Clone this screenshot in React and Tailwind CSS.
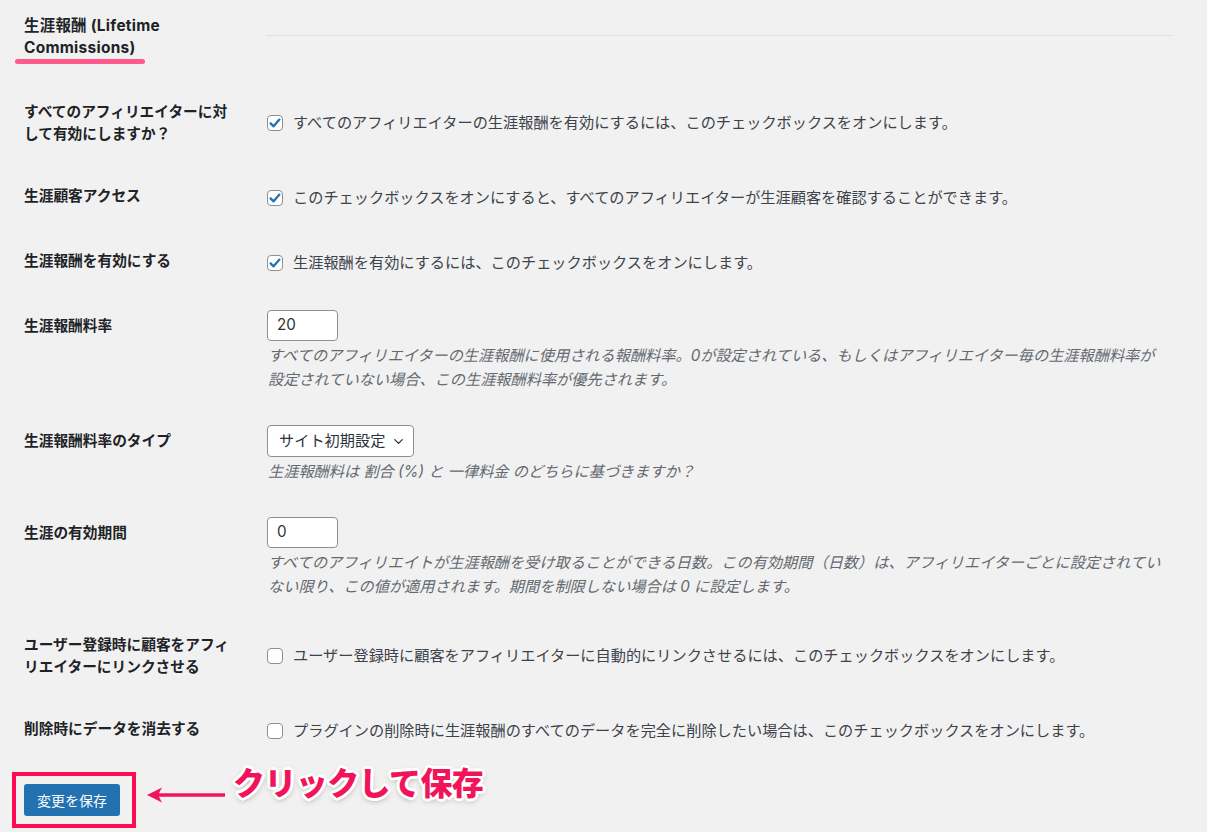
import { ChevronDown } from 'lucide-react'

function Checkbox({ checked }) {
  return (
    <span className="ml-[1px] flex h-[16px] w-[16px] shrink-0 items-center justify-center rounded-[4px] border border-[#8c8f94] bg-white">
      {checked && (
        <svg width="14" height="14" viewBox="0 0 14 14" aria-hidden="true">
          <path d="M2.6 7.4 L5.6 10.3 L11.4 3.6" fill="none" stroke="#2271b1" strokeWidth="2.3" strokeLinecap="round" strokeLinejoin="round" />
        </svg>
      )}
    </span>
  )
}

function Row({ label, children, field = false, pb = 'pb-[18px]' }) {
  return (
    <div className="flex">
      <div className="w-[242px] shrink-0 py-[20px] pr-[30px] text-[14.7px] font-bold leading-[22px] text-[#1d2327]">{label}</div>
      {field ? (
        <div className={`min-h-[65px] flex-1 pt-[15px] ${pb}`}>{children}</div>
      ) : (
        <div className="flex min-h-[65px] flex-1 items-center py-[15px]">{children}</div>
      )}
    </div>
  )
}

function CheckRow({ label, checked, text }) {
  return (
    <Row label={label}>
      <label className="flex items-center gap-[10px] leading-[22px] text-[#3c434a]">
        <Checkbox checked={checked} />
        <span>{text}</span>
      </label>
    </Row>
  )
}

function Description({ children }) {
  return <p className="mt-[3px] pl-[2px] italic leading-[24px] text-[#646970]">{children}</p>
}

function TextInput({ value }) {
  return (
    <div className="ml-[1px] flex h-[31px] w-[71px] items-center rounded-[4px] border border-[#8c8f94] bg-white px-[9px] text-[#2c3338]">
      {value}
    </div>
  )
}

export default function App() {
  return (
    <div className="min-h-screen bg-[#f1f1f1] pl-[24px] pr-[42px] font-[Inter,'Noto_Sans_CJK_JP',sans-serif] text-[15.2px]">
      <div className="flex">
        <div className="w-[242px] shrink-0 pt-[15px] pb-[17px] pr-[30px]">
          <h2 className="text-[15.4px] font-bold leading-[22px] tracking-[0.3px] text-[#1d2327]">生涯報酬 (Lifetime Commissions)</h2>
          <div className="-ml-[9px] h-[5px] w-[130px] rounded-full bg-[#ff5a8c]" />
        </div>
        <div className="-mr-[8px] flex-1 pt-[35px]">
          <div className="border-t border-[#e0e0e1]" />
        </div>
      </div>

      <CheckRow
        label="すべてのアフィリエイターに対して有効にしますか？"
        checked
        text="すべてのアフィリエイターの生涯報酬を有効にするには、このチェックボックスをオンにします。"
      />
      <CheckRow
        label="生涯顧客アクセス"
        checked
        text="このチェックボックスをオンにすると、すべてのアフィリエイターが生涯顧客を確認することができます。"
      />
      <CheckRow label="生涯報酬を有効にする" checked text="生涯報酬を有効にするには、このチェックボックスをオンにします。" />

      <Row label="生涯報酬料率" field>
        <TextInput value="20" />
        <Description>
          すべてのアフィリエイターの生涯報酬に使用される報酬料率。0が設定されている、もしくはアフィリエイター毎の生涯報酬料率が設定されていない場合、この生涯報酬料率が優先されます。
        </Description>
      </Row>

      <Row label="生涯報酬料率のタイプ" field>
        <div className="ml-[1px] flex h-[32px] w-[147px] items-center rounded-[4px] border border-[#8c8f94] bg-white pl-[11px] pr-[7px] text-[#2c3338]">
          <span>サイト初期設定</span>
          <ChevronDown size={15} strokeWidth={2} className="ml-auto text-[#2c3338]" aria-hidden="true" />
        </div>
        <Description>生涯報酬料は 割合 (%) と 一律料金 のどちらに基づきますか？</Description>
      </Row>

      <Row label="生涯の有効期間" field pb="pb-[15px]">
        <TextInput value="0" />
        <Description>
          すべてのアフィリエイトが生涯報酬を受け取ることができる日数。この有効期間（日数）は、アフィリエイターごとに設定されていない限り、この値が適用されます。期間を制限しない場合は 0 に設定します。
        </Description>
      </Row>

      <CheckRow
        label="ユーザー登録時に顧客をアフィリエイターにリンクさせる"
        text="ユーザー登録時に顧客をアフィリエイターに自動的にリンクさせるには、このチェックボックスをオンにします。"
      />
      <CheckRow
        label="削除時にデータを消去する"
        text="プラグインの削除時に生涯報酬のすべてのデータを完全に削除したい場合は、このチェックボックスをオンにします。"
      />

      <div className="mt-[9px] flex items-start">
        <div className="-ml-[12px] border-[4px] border-[#ff0a55] py-[8px] pl-[8px] pr-[12px]">
          <button
            type="button"
            className="flex h-[32px] w-[96px] items-center justify-center rounded-[3px] bg-[#2271b1] text-[14px] text-white"
          >
            変更を保存
          </button>
        </div>
        <svg width="78" height="20" viewBox="0 0 78 20" className="ml-[11px] mt-[13px]" aria-hidden="true">
          <path d="M9 10 H78" stroke="#f2145a" strokeWidth="3.5" />
          <path d="M0 10 L15 2.5 L11 10 L15 17.5 Z" fill="#f2145a" />
        </svg>
        <span className="-mt-[6px] ml-[8px] text-[32px] font-black leading-[36px] tracking-[-0.6px] text-[#f2145a] [text-shadow:3px_0_0_#fff,-3px_0_0_#fff,0_3px_0_#fff,0_-3px_0_#fff,2px_2px_0_#fff,-2px_-2px_0_#fff,2px_-2px_0_#fff,-2px_2px_0_#fff,0_2px_6px_rgba(0,0,0,0.45)]">
          クリックして保存
        </span>
      </div>
    </div>
  )
}
